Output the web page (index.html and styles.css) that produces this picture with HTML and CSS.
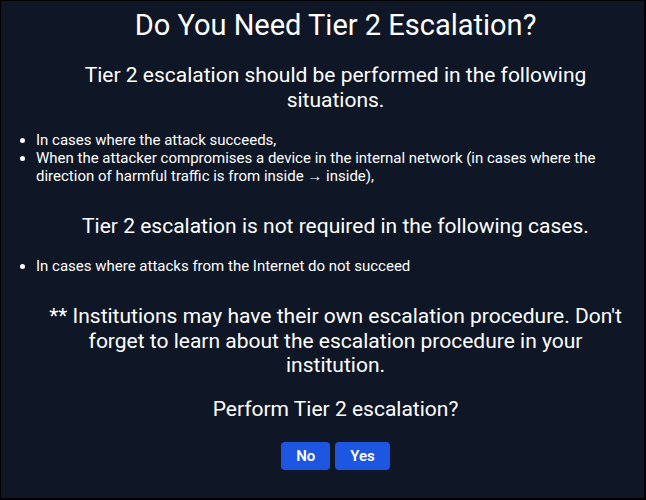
FILE: index.html
```html
<!DOCTYPE html>
<html>
<head>
<meta charset="utf-8">
<link rel="stylesheet" href="styles.css">
</head>
<body>
<div class="frame">
  <h1 class="title">Do You Need Tier 2 Escalation?</h1>
  <h2 class="sub">Tier 2 escalation should be performed in the following situations.</h2>
  <ul class="list">
    <li>In cases where the attack succeeds,</li>
    <li>When the attacker compromises a device in the internal network (in cases where the direction of harmful traffic is from inside → inside),</li>
  </ul>
  <h2 class="sub sub-2">Tier 2 escalation is not required in the following cases.</h2>
  <ul class="list">
    <li>In cases where attacks from the Internet do not succeed</li>
  </ul>
  <p class="note">** Institutions may have their own escalation procedure. Don't forget to learn about the escalation procedure in your institution.</p>
  <p class="ask">Perform Tier 2 escalation?</p>
  <div class="actions">
    <button class="btn">No</button>
    <button class="btn">Yes</button>
  </div>
</div>
</body>
</html>
```
FILE: styles.css
```css
html, body {
  margin: 0;
  padding: 0;
  background: #000;
}
body {
  font-family: Roboto, "Liberation Sans", sans-serif;
  color: #fff;
}
.frame {
  box-sizing: border-box;
  width: 646px;
  height: 500px;
  background: #0f1726;
  border-style: solid;
  border-color: #000;
  border-width: 1px 2px 2px 1px;
  padding-top: 7px;
}
.title {
  margin: 0;
  padding-left: 26px;
  font-size: 29px;
  font-weight: 400;
  line-height: 34px;
  text-align: center;
}
.sub {
  margin: 21px 0 0;
  padding: 0 19px 0 45px;
  font-size: 21px;
  font-weight: 400;
  line-height: 25px;
  text-align: center;
}
.sub-2 {
  margin-top: 29px;
}
.list {
  margin: 18px 0 0;
  padding: 0 20px 0 35px;
  font-size: 15px;
  line-height: 18px;
}
.note {
  margin: 29px 0 0;
  padding: 0 19px 0 45px;
  font-size: 21px;
  line-height: 24.5px;
  text-align: center;
}
.ask {
  margin: 19px 0 0;
  padding-left: 26px;
  font-size: 21px;
  line-height: 24px;
  text-align: center;
}
.actions {
  display: flex;
  justify-content: center;
  gap: 5px;
  margin-top: 21px;
  padding-left: 26px;
}
.btn {
  box-sizing: border-box;
  height: 28px;
  padding: 0 15px;
  border: none;
  border-radius: 4px;
  background: #1d56e0;
  color: #fff;
  font-family: Roboto, "Liberation Sans", sans-serif;
  font-size: 15px;
  font-weight: 600;
}
```
